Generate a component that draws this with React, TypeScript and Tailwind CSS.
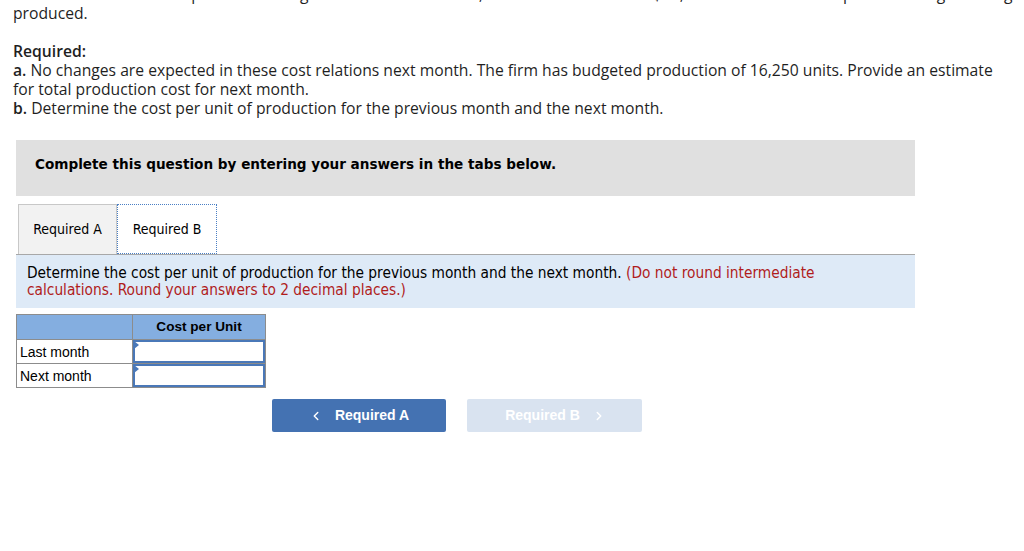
import { ChevronLeft, ChevronRight } from "lucide-react"

const proxima = { fontFamily: "'Open Sans', 'Liberation Sans', sans-serif" }

export default function App() {
  return (
    <div className="w-[1024px] h-[551px] overflow-hidden bg-white text-[#1f1f1f]">
      {/* question text */}
      <div className="px-[13px] text-[15.7px] leading-[19px]" style={proxima}>
        <p className="-mt-[15px] whitespace-nowrap">
          The cost relations are expected to change next month as shown; with total fixed cost of $18,600 and variable cost per unit being unchanged
        </p>
        <p>produced.</p>
        <p className="mt-[19px] font-semibold">Required:</p>
        <p>
          <span className="font-semibold">a.</span> No changes are expected in these cost relations next month. The firm has budgeted production of 16,250 units. Provide an estimate for total production cost for next month.
        </p>
        <p>
          <span className="font-semibold">b.</span> Determine the cost per unit of production for the previous month and the next month.
        </p>
      </div>

      <div className="ml-[16px] w-[899px] mt-[22px]">
        <div className="h-[56px] bg-[#e0e0e0] pl-[19px] pt-[14px] text-[13.6px] font-bold text-black" style={{ fontFamily: "'DejaVu Sans', Verdana, sans-serif" }}>
          Complete this question by entering your answers in the tabs below.
        </div>

        {/* tabs */}
        <div className="mt-[8px] flex border-b border-[#a8a8a8] text-[14px] text-black" style={{ fontFamily: "'DejaVu Sans Condensed', 'DejaVu Sans', sans-serif" }}>
          <div className="ml-[2px] flex h-[50px] w-[99px] items-center justify-center border border-b-0 border-[#c8c8c8] bg-[#f2f2f2]">
            Required A
          </div>
          <div className="flex h-[50px] w-[100px] items-center justify-center border border-dotted border-[#4a7fc4] bg-white">
            Required B
          </div>
        </div>

        {/* instructions */}
        <div className="h-[53px] bg-[#deeaf7] px-[11px] pt-[10px] text-[15.3px] leading-[17px] text-black" style={{ fontFamily: "'DejaVu Sans Condensed', 'DejaVu Sans', sans-serif" }}>
          Determine the cost per unit of production for the previous month and the next month.{" "}
          <span className="text-[#b01c1c]">(Do not round intermediate calculations. Round your answers to 2 decimal places.)</span>
        </div>

        {/* answer table */}
        <table className="mt-[6px] border-collapse text-[14px] text-black" style={{ fontFamily: "'Liberation Sans', Arial, sans-serif" }}>
          <thead>
            <tr className="h-[25px] bg-[#84aee0]">
              <th className="w-[116px] border border-[#8c8c8c]"></th>
              <th className="w-[133px] border border-[#8c8c8c] text-center text-[13.6px] font-bold">Cost per Unit</th>
            </tr>
          </thead>
          <tbody>
            {["Last month", "Next month"].map((label) => (
              <tr key={label} className="h-[24px]">
                <td className="border border-[#8c8c8c] pl-[3px] pt-[1px] text-left">{label}</td>
                <td className="relative border border-[#8c8c8c] p-0">
                  <div className="h-[23px] border-2 border-[#4a78b8] bg-white" />
                  <span className="absolute left-[1px] top-[1px] h-0 w-0 border-y-[4px] border-l-[5px] border-y-transparent border-l-[#4a78b8]" />
                </td>
              </tr>
            ))}
          </tbody>
        </table>

        {/* nav buttons */}
        <div className="mt-[11px] ml-[256px] flex gap-[21px] text-[14px] font-bold text-white" style={{ fontFamily: "'Liberation Sans', Arial, sans-serif" }}>
          <button className="flex h-[33px] w-[174px] items-center justify-center gap-[12px] rounded-[2px] bg-[#4472b2]">
            <ChevronLeft size={14} strokeWidth={2.5} />
            <span>Required A</span>
          </button>
          <button className="flex h-[33px] w-[175px] items-center justify-center gap-[12px] rounded-[2px] bg-[#d9e3f0] pl-[2px]">
            <span>Required B</span>
            <ChevronRight size={14} strokeWidth={2.5} />
          </button>
        </div>
      </div>
    </div>
  )
}
